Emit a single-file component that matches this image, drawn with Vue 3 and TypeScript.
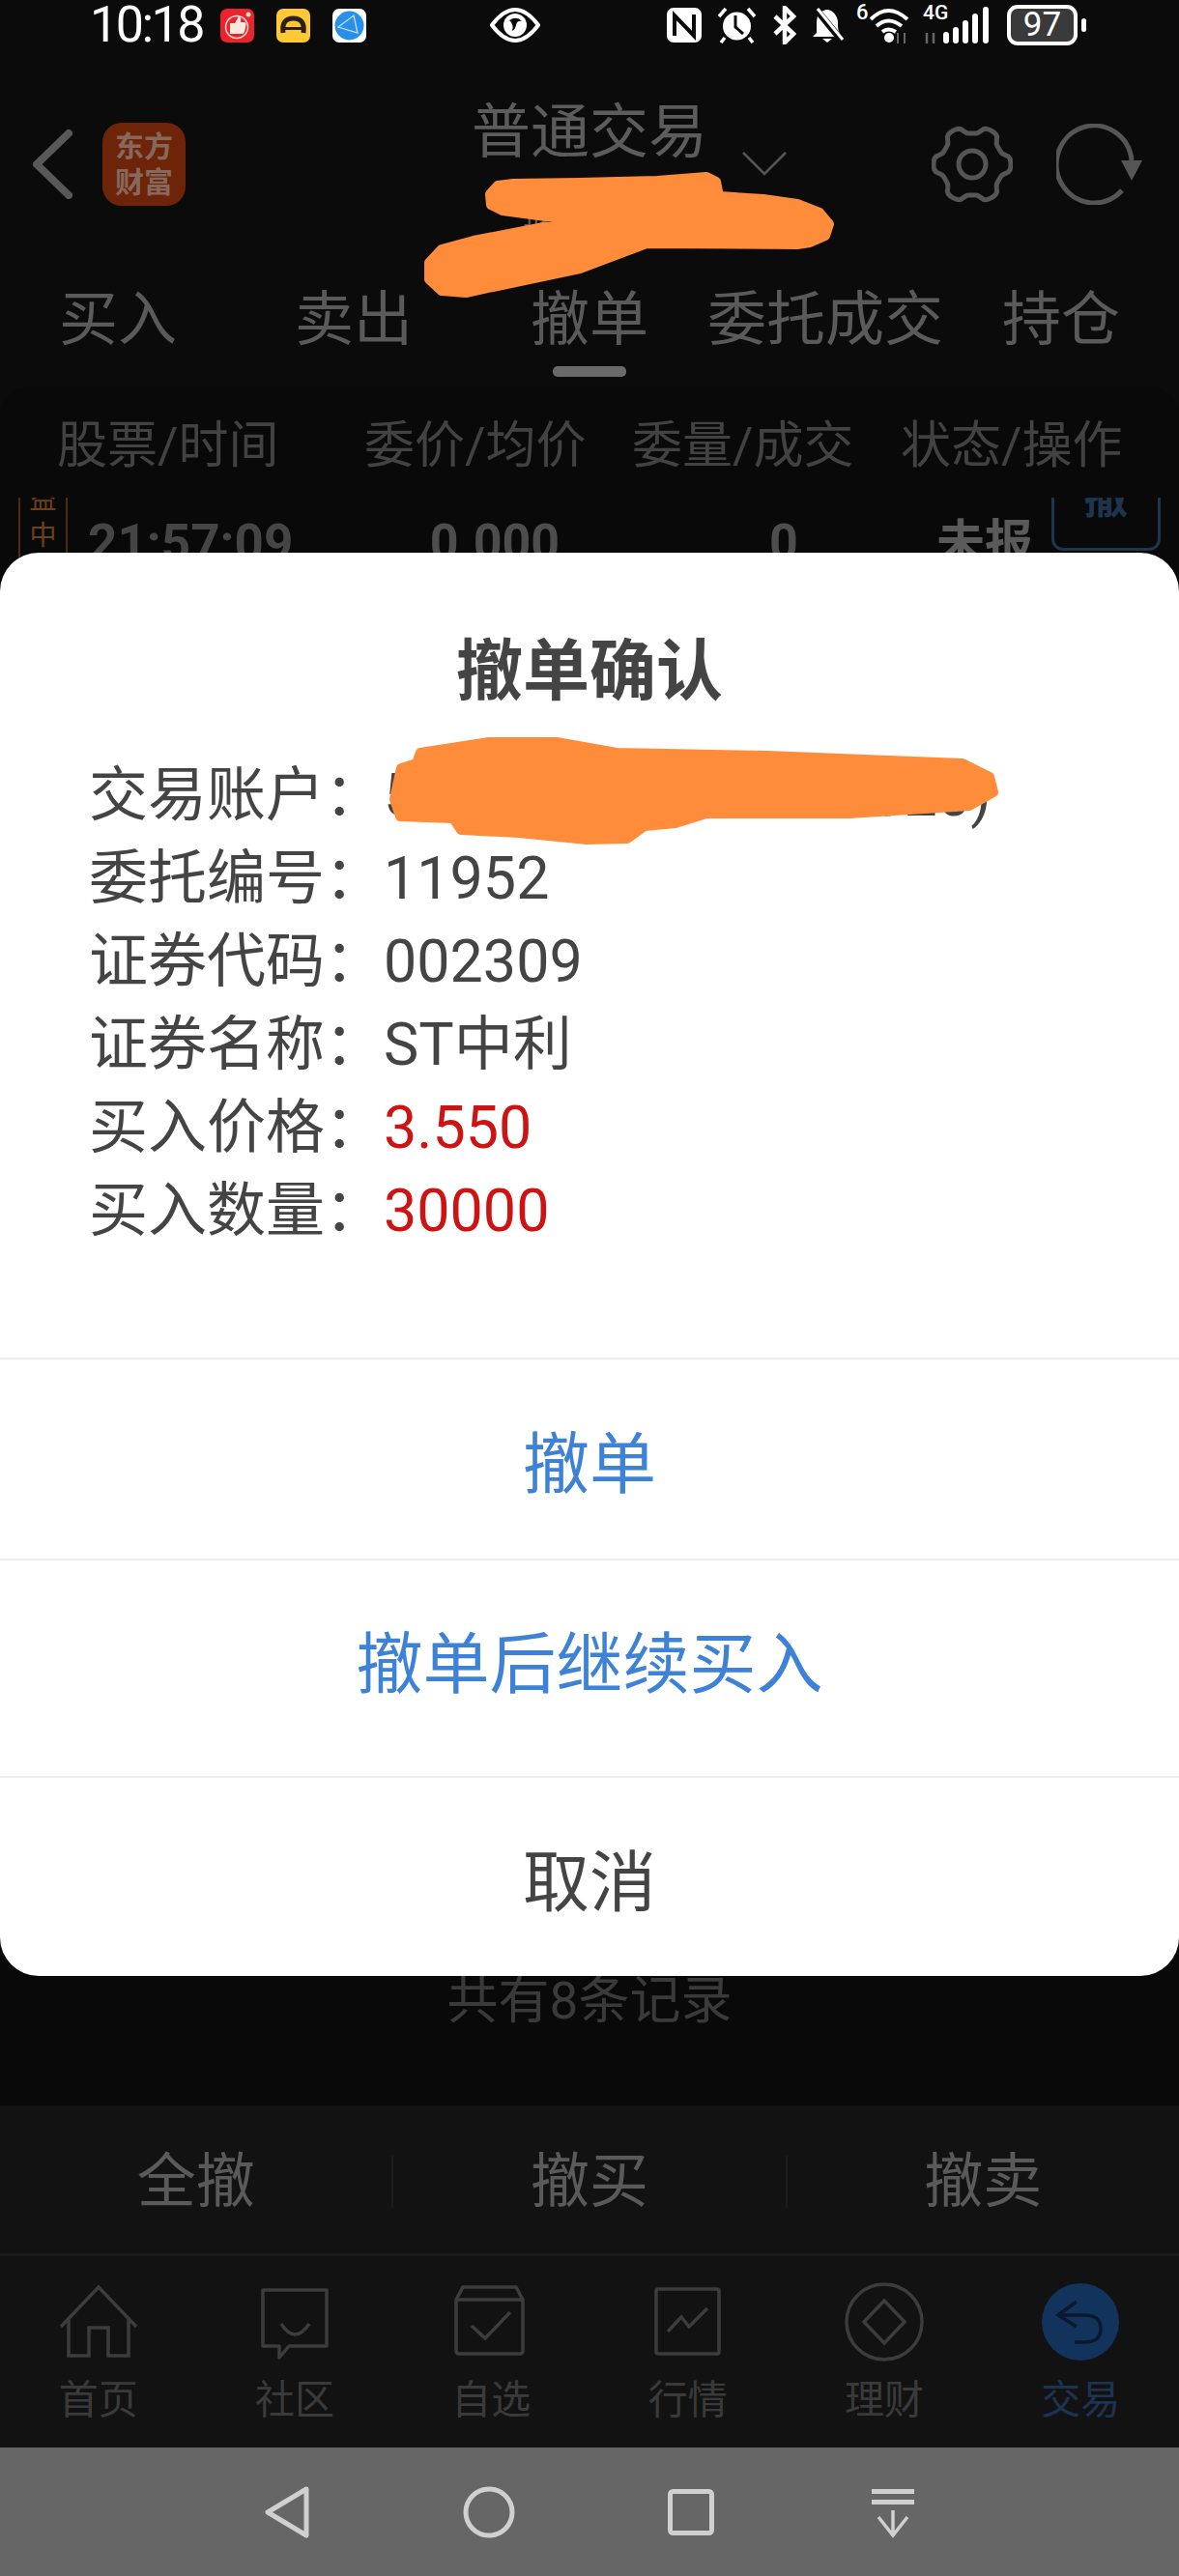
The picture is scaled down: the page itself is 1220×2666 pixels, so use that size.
<script setup lang="ts">
const tabs = ['买入', '卖出', '撤单', '委托成交', '持仓']
const columns = ['股票/时间', '委价/均价', '委量/成交', '状态/操作']
const actions = ['全撤', '撤买', '撤卖']
const details = [
  { label: '委托编号', value: '11952', red: false },
  { label: '证券代码', value: '002309', red: false },
  { label: '证券名称', value: 'ST中利', red: false },
  { label: '买入价格', value: '3.550', red: true },
  { label: '买入数量', value: '30000', red: true }
]
const navItems = ['首页', '社区', '自选', '行情', '理财', '交易']

// wavy outline of the settings cog, six lobes with flattened tops
const gearPath = (() => {
  const pts: string[] = []
  for (let deg = 0; deg < 360; deg += 4) {
    const t = (deg * Math.PI) / 180
    const r = 36 + (4 * Math.tanh(2 * Math.cos(6 * t))) / Math.tanh(2)
    pts.push(`${(42 + r * Math.cos(t)).toFixed(1)} ${(41 + r * Math.sin(t)).toFixed(1)}`)
  }
  return `M${pts.join('L')}Z`
})()
</script>

<template>
  <div class="page">
    <div class="status">
      <span class="time">10:18</span>
      <svg class="s-red" width="35" height="35" viewBox="0 0 35 35">
        <rect width="35" height="35" rx="7" fill="#e9242f" />
        <circle cx="17" cy="19" r="11.500" fill="none" stroke="#ffd9d0" stroke-width="1.500" />
        <path d="M10 15h5l4-7q3 0 2 6h4q2 0 1.500 3l-1.500 7q-.5 2-3 2H10z" fill="#fdeadf" />
        <circle cx="29" cy="6" r="2.500" fill="#ffd9d0" />
      </svg>
      <svg class="s-app" width="35" height="35" viewBox="0 0 35 35">
        <rect width="35" height="35" rx="7" fill="#fdc936" />
        <path d="M7 25q-2-15 10.500-15Q30 10 28 25" fill="none" stroke="#2a2112" stroke-width="5" />
        <path d="M9 19h17v3H9z" fill="#2a2112" />
      </svg>
      <svg class="s-app" width="35" height="35" viewBox="0 0 35 35">
        <rect width="35" height="35" rx="7" fill="#fff" />
        <circle cx="17.500" cy="17.500" r="15" fill="#2a8fe9" />
        <path d="M6 19L22 7l4 18zM6 19l20 6" fill="none" stroke="#bfe3fb" stroke-width="1.300" />
      </svg>
      <svg class="s-eye" width="52" height="36" viewBox="0 0 52 36">
        <path d="M2 18Q14 2 26 2t24 16Q38 34 26 34T2 18z" fill="#0a0a0a" stroke="#fff" stroke-width="4" />
        <circle cx="26" cy="18" r="12" fill="#fff" />
        <path d="M20 13q8-5 13 1-5-1-6 4t-4 6q2-7-3-11z" fill="#0a0a0a" />
      </svg>
      <svg class="s-nfc" width="36" height="36" viewBox="0 0 36 36">
        <rect width="36" height="36" rx="7" fill="#fff" />
        <path d="M8 29V8l20 21V7" fill="none" stroke="#0a0a0a" stroke-width="4" />
      </svg>
      <svg class="s-alarm" width="41" height="38" viewBox="0 0 41 38">
        <circle cx="20.500" cy="20" r="14.500" fill="#fff" />
        <path d="M19 9v12l8 7" fill="none" stroke="#0a0a0a" stroke-width="3" />
        <path d="M2 10L9 2M39 10L32 2M8 32l-4 5M33 32l4 5" stroke="#fff" stroke-width="3.500" />
      </svg>
      <svg class="s-bt" width="25" height="40" viewBox="0 0 25 40">
        <path d="M3 11l19 18-9 9V2l9 9L3 29" fill="none" stroke="#fff" stroke-width="4.500" />
      </svg>
      <svg class="s-bell" width="35" height="36" viewBox="0 0 35 36">
        <path d="M16 2q-10 2-10 13v11l-4 4h28v-4q-2-2-2-8V14Q26 4 18 2z" fill="#fff" />
        <path d="M12 32h10l-5 4z" fill="#fff" />
        <path d="M5 1l27 33" stroke="#0a0a0a" stroke-width="7" />
        <path d="M7 1l26 32" stroke="#fff" stroke-width="3" />
      </svg>
      <div class="wifi">
        <span class="wifi-six">6</span>
        <svg width="42" height="37" viewBox="0 0 42 37">
          <path d="M2 12Q20-6 40 12M8 19q12-11 26 0M14 25q6-5 14 0" fill="none" stroke="#fff" stroke-width="4" />
          <circle cx="17" cy="31" r="5" fill="#fff" transform="translate(4 0)" />
          <path d="M30 26v11M37 26v11" stroke="#666" stroke-width="2" />
        </svg>
      </div>
      <div class="signal">
        <span class="signal-type">4G</span>
        <svg width="70" height="38" viewBox="0 0 70 38">
          <path d="M4 27v11M11 27v11" stroke="#666" stroke-width="2.500" />
          <rect x="21" y="26" width="6" height="12" rx="3" fill="#fff" />
          <rect x="31" y="21" width="6" height="17" rx="3" fill="#fff" />
          <rect x="41" y="14" width="6" height="24" rx="3" fill="#fff" />
          <rect x="51" y="7" width="6" height="31" rx="3" fill="#fff" />
          <rect x="62" y="0" width="6" height="38" rx="3" fill="#fff" />
        </svg>
      </div>
      <div class="battery"><span class="battery-num">97</span></div>
      <span class="battery-cap"></span>
    </div>

    <div class="topbar">
      <div class="top-left">
        <svg width="42" height="72" viewBox="0 0 42 72">
          <path d="M38 4L5 36l33 32" fill="none" stroke="#585858" stroke-width="8" stroke-linecap="round" stroke-linejoin="round" />
        </svg>
        <div class="logo">东方<br />财富</div>
      </div>
      <div class="top-title">
        <div class="title">普通交易</div>
        <svg class="title-chevron" width="48" height="26" viewBox="0 0 48 26">
          <path d="M2 2l22 22L46 2" fill="none" stroke="#555" stroke-width="2.500" />
        </svg>
        <div class="subtitle">报</div>
      </div>
      <div class="top-right">
        <svg width="84" height="82" viewBox="0 0 84 82">
          <path :d="gearPath" fill="none" stroke="#555" stroke-width="5" stroke-linejoin="round" />
          <circle cx="42" cy="41" r="14" fill="none" stroke="#555" stroke-width="5" />
        </svg>
        <svg class="refresh" width="90" height="84" viewBox="0 0 90 84">
          <path d="M68 69A39 40 0 1 1 78 38" fill="none" stroke="#555" stroke-width="5" />
          <path d="M67 38h22L78 59z" fill="#555" />
        </svg>
      </div>
    </div>

    <div class="tabs">
      <div v-for="(tab, i) in tabs" :key="tab" class="tab">
        <span class="tab-text">{{ tab }}</span>
        <span class="tab-bar" :class="{ on: i === 2 }"></span>
      </div>
    </div>

    <div class="list">
      <div class="list-head">
        <span v-for="col in columns" :key="col">{{ col }}</span>
      </div>
      <div class="list-clip">
        <div class="row">
          <div class="row-tag">益<br />中</div>
          <span class="row-time">21:57:09</span>
          <span class="row-num">0.000</span>
          <span class="row-num">0</span>
          <span class="row-state">未报</span>
          <div class="row-btn">撤</div>
        </div>
      </div>
      <div class="records">共有8条记录</div>
    </div>

    <div class="actions">
      <template v-for="(action, i) in actions" :key="action">
        <span v-if="i > 0" class="action-sep"></span>
        <span class="action">{{ action }}</span>
      </template>
    </div>

    <div class="tabbar">
      <div v-for="(item, i) in navItems" :key="item" class="nav-item" :class="{ active: i === 5 }">
        <svg width="84" height="84" viewBox="0 0 84 84" fill="none" stroke="#3c3c3c" stroke-width="3.500">
          <template v-if="i === 0">
            <path d="M3 47L42 6l39 41M11 37v40h21V48h20v29h21V37" />
          </template>
          <template v-else-if="i === 1">
            <path d="M9 9h66v58H36L26 79V67H9z" stroke-linejoin="round" />
            <path d="M28 44q14 22 29 0" />
          </template>
          <template v-else-if="i === 2">
            <path d="M6 19v53q0 3 3 3h63q3 0 3-3V19l-7-13H13zM6 19h69M22 46l14 13 26-27" />
          </template>
          <template v-else-if="i === 3">
            <rect x="9" y="8" width="65" height="67" rx="2" />
            <path d="M21 52l14-15 8 10 19-19" />
          </template>
          <template v-else-if="i === 4">
            <circle cx="42" cy="42" r="39" />
            <path d="M42 20l21 22-21 22-21-22z" />
          </template>
          <template v-else>
            <circle cx="42" cy="42" r="40" fill="#12335c" stroke="none" />
            <path d="M38 21L19 35l19 12M19 35h27q17 0 17 14T46 63H36" stroke="#0a1a2c" />
          </template>
        </svg>
        <span class="nav-label">{{ item }}</span>
      </div>
    </div>

    <div class="sysnav">
      <svg width="60" height="60" viewBox="0 0 60 60" fill="none" stroke="#d0d0d0" stroke-width="5" stroke-linejoin="round">
        <path d="M50 6L10 30l40 24z" />
      </svg>
      <svg width="60" height="60" viewBox="0 0 60 60" fill="none" stroke="#d0d0d0" stroke-width="5">
        <circle cx="30" cy="30" r="24" />
      </svg>
      <svg width="60" height="60" viewBox="0 0 60 60" fill="none" stroke="#d0d0d0" stroke-width="5">
        <rect x="8.500" y="8.500" width="43" height="43" rx="3" />
      </svg>
      <svg width="60" height="60" viewBox="0 0 60 60" fill="none" stroke="#d0d0d0" stroke-width="5">
        <path d="M8 8.500h44M8 19.500h44" />
        <path d="M30 28v25M15 35l15 19 15-19" stroke-width="3.500" />
      </svg>
    </div>

    <div class="dialog">
      <div class="dialog-title">撤单确认</div>
      <div class="detail">
        <span>交易账户</span><span class="colon">：</span><span>5</span><span class="account-end">020)</span>
      </div>
      <div v-for="d in details" :key="d.label" class="detail">
        <span>{{ d.label }}</span><span class="colon">：</span><span :class="{ red: d.red }">{{ d.value }}</span>
      </div>
      <div class="choices">
        <div class="choice choice-a">撤单</div>
        <div class="choice choice-b">撤单后继续买入</div>
        <div class="choice choice-c">取消</div>
      </div>
    </div>

    <!-- hand-drawn redaction strokes over the picture -->
    <svg class="scribble" width="1220" height="900" viewBox="0 0 1220 900">
      <g fill="#ff8c3a" stroke="#ff8c3a" stroke-width="10" stroke-linejoin="round">
        <path d="M507 201L515 192 531 190 600 189 680 187 731 183 741 188 744 203 790 206 825 211 848 220 858 232 854 244 838 251 825 253 669 252 600 278 510 297 482 303 457 301 444 289 444 272 457 258 490 249 578 232 580 226 520 218 508 212z" />
        <path d="M431 790L435 779 506 768 576 768 638 779 794 782 996 790 1024 804 1028 820 1003 834 879 842 731 842 699 852 667 855 649 868 607 869 537 862 477 859 469 847 414 845 408 827 415 795z" />
      </g>
    </svg>
  </div>
</template>

<style>
body {
  margin: 0;
  background: #0a0a0a;
}
</style>

<style scoped>
.page {
  position: relative;
  display: flex;
  flex-direction: column;
  width: 1220px;
  height: 2666px;
  overflow: hidden;
  background: #0b0b0b;
  font-family: Roboto, "Noto Sans CJK SC", sans-serif;
  color: #5a5a5a;
}

.status {
  display: flex;
  flex: none;
  align-items: center;
  height: 52px;
  padding: 0 0 8px 93px;
  color: #fff;
}
.time {
  width: 118px;
  font-size: 52px;
  line-height: 52px;
  letter-spacing: -2.500px;
}
.s-red { margin-left: 17px; }
.s-app { margin-left: 23px; }
.s-eye { margin-left: 128px; }
.s-nfc { margin-left: 131px; }
.s-alarm { margin-left: 16px; }
.s-bt { margin-left: 16px; }
.s-bell { margin-left: 15px; }
.wifi {
  position: relative;
  display: flex;
  margin-left: 25px;
}
.wifi-six {
  position: absolute;
  left: -13px;
  top: -7px;
  font-size: 22px;
  line-height: 24px;
  font-weight: 500;
}
.signal {
  position: relative;
  display: flex;
  margin-left: 14px;
}
.signal-type {
  position: absolute;
  left: 0;
  top: -6px;
  font-size: 21px;
  line-height: 24px;
  font-weight: 500;
}
.battery {
  display: flex;
  align-items: center;
  justify-content: center;
  box-sizing: border-box;
  width: 73px;
  height: 42px;
  margin-left: 17px;
  border: 4px solid #fff;
  border-radius: 11px;
  background: #3a3a3a;
}
.battery-num {
  font-size: 35px;
  line-height: 36px;
}
.battery-cap {
  width: 5px;
  height: 14px;
  margin-left: 4px;
  border-radius: 3px;
  background: #fff;
}

.topbar {
  display: grid;
  flex: none;
  grid-template-columns: 1fr auto 1fr;
  height: 220px;
}
.top-left {
  display: flex;
  align-items: center;
  padding-left: 33px;
}
.logo {
  box-sizing: border-box;
  width: 86px;
  height: 86px;
  margin-left: 31px;
  padding-top: 6px;
  border-radius: 20px;
  background: #6e2408;
  color: #86695c;
  font-size: 30px;
  line-height: 37px;
  font-weight: 700;
  text-align: center;
}
.top-title {
  position: relative;
  display: flex;
  flex-direction: column;
  padding-top: 47px;
}
.title {
  font-size: 61px;
  line-height: 60px;
  color: #5c5c5c;
}
.title-chevron {
  position: absolute;
  left: 279px;
  top: 96px;
}
.subtitle {
  margin: 36px 108px 0 0;
  font-size: 30px;
  line-height: 36px;
  text-align: center;
  color: #5c5c5c;
}
.top-right {
  display: flex;
  align-items: center;
  justify-content: flex-end;
  padding-right: 37px;
}
.refresh {
  margin-left: 45px;
}

.tabs {
  display: grid;
  flex: none;
  grid-template-columns: repeat(5, 1fr);
}
.tab {
  display: flex;
  flex-direction: column;
  align-items: center;
}
.tab-text {
  margin-top: 3px;
  font-size: 61px;
  line-height: 96px;
  color: #5a5a5a;
}
.tab-bar {
  width: 76px;
  height: 11px;
  border-radius: 5px;
}
.tab-bar.on {
  background: #6a6a6a;
}

.list {
  display: flex;
  flex: 1;
  flex-direction: column;
  min-height: 0;
  margin-top: 10px;
  border-radius: 30px 30px 0 0;
  background: #090909;
}
.list-head {
  display: grid;
  grid-template-columns: 318px 277px 278px auto;
  padding: 37px 0 0 59px;
  font-size: 52px;
  line-height: 50px;
  color: #424242;
  white-space: nowrap;
}
.list-clip {
  height: 100px;
  margin-top: 28px;
  overflow: hidden;
}
.row {
  display: grid;
  grid-template-columns: 72px 270px 302px 296px 129px 113px;
  align-items: center;
  height: 184px;
  margin-top: -45px;
  padding-left: 19px;
  font-size: 52px;
  line-height: 60px;
  font-weight: 700;
  color: #454545;
}
.row-time {
  font-size: 53px;
}
.row-tag {
  align-self: stretch;
  box-sizing: border-box;
  width: 51px;
  padding-top: 29px;
  border-left: 2px solid #4a2c10;
  border-right: 2px solid #4a2c10;
  font-size: 28px;
  line-height: 37px;
  font-weight: 400;
  text-align: center;
  color: #6b4115;
}
.row-num {
  text-align: center;
  color: #4d4d4d;
}
.row-state {
  padding-left: 10px;
  font-size: 50px;
  color: #5a5a5a;
}
.row-btn {
  display: flex;
  align-items: center;
  justify-content: center;
  align-self: start;
  box-sizing: border-box;
  height: 100px;
  padding-bottom: 10px;
  border: 3px solid #1e3550;
  border-radius: 0 0 12px 12px;
  font-size: 46px;
  color: #1e3550;
}
.records {
  margin-top: auto;
  padding-bottom: 78px;
  font-size: 53px;
  line-height: 60px;
  text-align: center;
  color: #3a3a3a;
}

.actions {
  display: flex;
  flex: none;
  align-items: center;
  box-sizing: border-box;
  height: 156px;
  padding-top: 4px;
  border-bottom: 3px solid #1a1a1a;
  background: #121212;
}
.action {
  flex: 1;
  font-size: 61px;
  line-height: 60px;
  text-align: center;
  color: #5a5a5a;
}
.action-sep {
  width: 2px;
  height: 54px;
  background: #1c1c1c;
}

.tabbar {
  display: grid;
  flex: none;
  grid-template-columns: repeat(6, 1fr);
  height: 198px;
  background: #121212;
}
.nav-item {
  display: flex;
  flex-direction: column;
  align-items: center;
  padding-top: 26px;
}
.nav-label {
  margin-top: 17px;
  font-size: 41px;
  line-height: 44px;
  color: #3a3a3a;
}
.nav-item.active .nav-label {
  color: #1c3352;
}

.sysnav {
  display: grid;
  flex: none;
  grid-template-columns: repeat(4, 209px);
  justify-items: center;
  align-items: center;
  height: 133px;
  padding-left: 192px;
  background: #666;
}

.dialog {
  position: absolute;
  top: 572px;
  left: 0;
  right: 0;
  display: flex;
  flex-direction: column;
  height: 1473px;
  padding-top: 84px;
  box-sizing: border-box;
  border-radius: 40px;
  background: #fff;
  color: #444;
}
.dialog-title {
  margin-bottom: 44px;
  font-size: 69px;
  line-height: 80px;
  font-weight: 700;
  text-align: center;
}
.detail {
  padding-left: 92px;
  font-size: 61px;
  line-height: 86px;
  white-space: nowrap;
}
.colon {
  display: inline-block;
  width: 61px;
}
.account-end {
  margin-left: 470px;
}
.red {
  color: #cc1414;
}
.choices {
  display: flex;
  flex: none;
  flex-direction: column;
  margin-top: auto;
  font-size: 69px;
}
.choice {
  display: flex;
  align-items: center;
  justify-content: center;
  box-sizing: border-box;
  border-top: 2px solid #eee;
  color: #3d82d6;
}
.choice-a { height: 208px; }
.choice-b {
  height: 225px;
  padding-bottom: 20px;
}
.choice-c {
  height: 207px;
  color: #444;
}

.scribble {
  position: absolute;
  top: 0;
  left: 0;
  pointer-events: none;
}
</style>
